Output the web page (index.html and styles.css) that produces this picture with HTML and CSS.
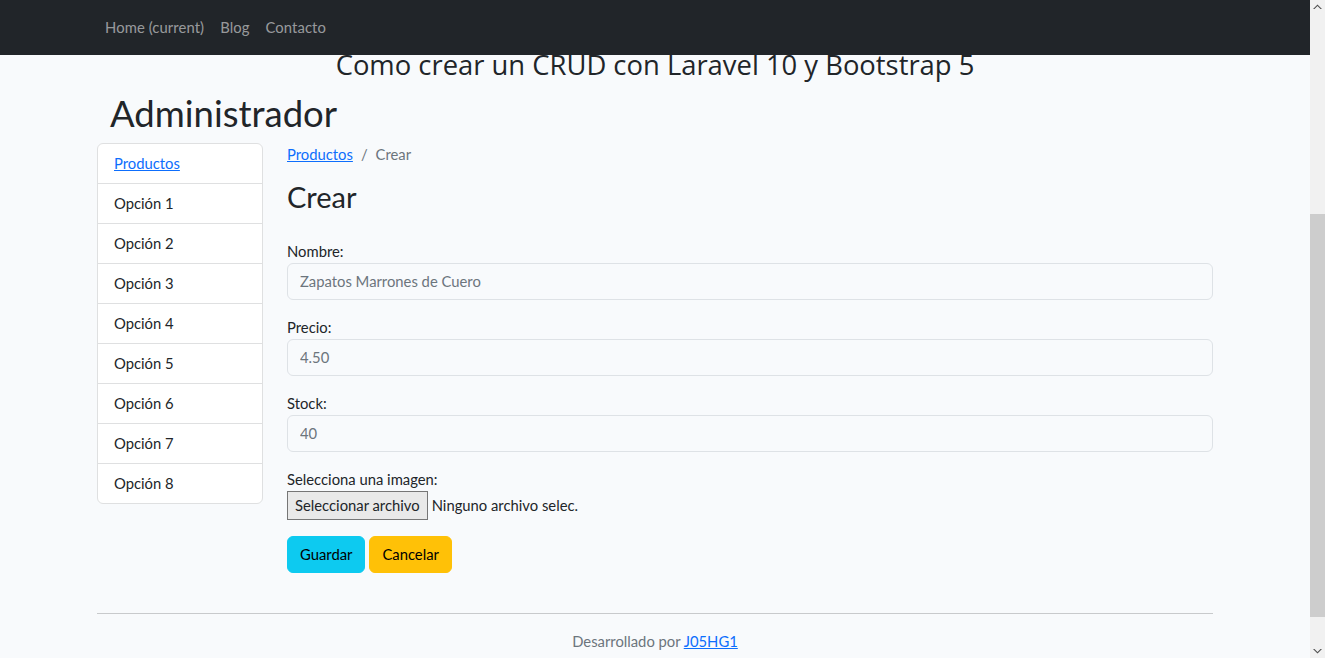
FILE: index.html
```html
<!DOCTYPE html>
<html lang="es">
<head>
<meta charset="utf-8">
<title>Crear producto</title>
<link rel="stylesheet" href="styles.css">
</head>
<body>
<nav class="navbar">
  <div class="container nav-inner">
    <a class="nav-link" href="#">Home (current)</a>
    <a class="nav-link" href="#">Blog</a>
    <a class="nav-link" href="#">Contacto</a>
  </div>
</nav>
<main class="container">
  <h2 class="site-title">Como crear un CRUD con Laravel 10 y Bootstrap 5</h2>
  <h1 class="admin-title">Administrador</h1>
  <div class="row">
    <aside class="col-side">
      <ul class="list-group">
        <li class="list-item"><a href="#">Productos</a></li>
        <li class="list-item">Opción 1</li>
        <li class="list-item">Opción 2</li>
        <li class="list-item">Opción 3</li>
        <li class="list-item">Opción 4</li>
        <li class="list-item">Opción 5</li>
        <li class="list-item">Opción 6</li>
        <li class="list-item">Opción 7</li>
        <li class="list-item">Opción 8</li>
      </ul>
    </aside>
    <section class="col-main">
      <ol class="breadcrumb">
        <li><a href="#">Productos</a></li>
        <li class="sep">/</li>
        <li class="active">Crear</li>
      </ol>
      <h2 class="page-title">Crear</h2>
      <form class="form">
        <div class="field">
          <label>Nombre:</label>
          <input class="form-control" type="text" placeholder="Zapatos Marrones de Cuero">
        </div>
        <div class="field">
          <label>Precio:</label>
          <input class="form-control" type="text" placeholder="4.50">
        </div>
        <div class="field">
          <label>Stock:</label>
          <input class="form-control" type="text" placeholder="40">
        </div>
        <div class="field">
          <label>Selecciona una imagen:</label>
          <div class="file-input">
            <span class="file-btn">Seleccionar archivo</span>
            <span class="file-name">Ninguno archivo selec.</span>
          </div>
        </div>
        <div class="actions">
          <button type="button" class="btn btn-info">Guardar</button>
          <button type="button" class="btn btn-warning">Cancelar</button>
        </div>
      </form>
    </section>
  </div>
  <hr class="divider">
  <footer class="footer">Desarrollado por <a href="#">J05HG1</a></footer>
</main>
<div class="scrollbar" aria-hidden="true">
  <svg class="sb-arrow" width="15" height="17" viewBox="0 0 15 17"><path d="M3 9 L7.5 4.5 L12 9 L10.5 9 L7.5 6 L4.5 9 Z" fill="#505050"/></svg>
  <div class="sb-track"><div class="sb-thumb"></div></div>
  <svg class="sb-arrow" width="15" height="17" viewBox="0 0 15 17"><path d="M3 8 L7.5 12.5 L12 8 L10.5 8 L7.5 11 L4.5 8 Z" fill="#505050"/></svg>
</div>
</body>
</html>
```

FILE: styles.css
```css
* { box-sizing: border-box; }
html { overflow: hidden; }
body {
  margin: 0 15px 0 0;
  background: #f8fafc;
  color: #212529;
  font-family: "Lato", "Noto Sans", sans-serif;
  font-size: 14.8px;
  line-height: 23px;
}
a { color: #0d6efd; }
.container {
  max-width: 1140px;
  margin: 0 auto;
  padding: 0 12px;
}
.navbar {
  background: #212529;
  padding: 8px 0;
}
.nav-inner { display: flex; }
.nav-link {
  color: rgba(255, 255, 255, 0.55);
  text-decoration: none;
  padding: 8px;
  line-height: 23px;
  letter-spacing: 0.1px;
}
.site-title {
  margin: 0 0 18px;
  text-align: center;
  font-family: "Open Sans", sans-serif;
  font-weight: 400;
  font-size: 27.4px;
  line-height: 19px;
}
.admin-title {
  margin: 0 0 8px;
  padding-left: 13px;
  font-weight: 400;
  font-size: 36.5px;
  line-height: 43px;
}
.row {
  display: flex;
  margin: 0 -12px;
}
.col-side { width: 190px; padding: 0 12px; flex: none; }
.col-main { flex: 1; padding: 0 12px; }
.list-group {
  list-style: none;
  margin: 0;
  padding: 0;
  background: #fff;
  border: 1px solid #dfe0e1;
  border-radius: 6px;
}
.list-item {
  padding: 8px 16px;
  border-top: 1px solid #dfe0e1;
}
.list-item:first-child { border-top: 0; }
.breadcrumb {
  list-style: none;
  margin: 0 0 16px;
  padding: 0;
  display: flex;
}
.breadcrumb .sep { color: #6c757d; padding: 0 8px; }
.breadcrumb .active { color: #6c757d; }
.page-title {
  margin: 0 0 12px;
  font-weight: 400;
  font-size: 29px;
  line-height: 30.5px;
}
.form { padding-top: 15px; }
.field { margin-bottom: 16px; }
.field label { display: block; }
.form-control {
  display: block;
  width: 100%;
  font: inherit;
  line-height: 23px;
  padding: 6px 12px;
  color: #212529;
  background: #f8fafc;
  border: 1px solid #dee2e6;
  border-radius: 6px;
}
.form-control::placeholder { color: #6c757d; }
.file-input { display: flex; align-items: center; gap: 4px; }
.file-btn {
  display: inline-block;
  padding: 2px 7px;
  line-height: 23px;
  background: #e9e9e9;
  border: 1px solid #767676;
  color: #212529;
}
.actions { display: flex; gap: 4px; }
.btn {
  font: inherit;
  line-height: 23px;
  padding: 6px 12px;
  border: 1px solid transparent;
  border-radius: 6px;
  color: #000;
}
.btn-info { background: #0dcaf0; border-color: #0dcaf0; }
.btn-warning { background: #ffc107; border-color: #ffc107; }
.divider {
  margin: 40px 0 16px;
  border: 0;
  border-top: 1px solid #c8cacc;
}
.footer {
  text-align: center;
  color: #6c757d;
}
.scrollbar {
  position: fixed;
  top: 0;
  right: 0;
  width: 15px;
  height: 100vh;
  background: #f1f1f1;
  display: flex;
  flex-direction: column;
}
.sb-arrow { display: block; flex: none; }
.sb-track { flex: 1; padding-top: 197px; padding-bottom: 24px; display: flex; }
.sb-thumb { flex: 1; background: #cdcdcd; }
```
